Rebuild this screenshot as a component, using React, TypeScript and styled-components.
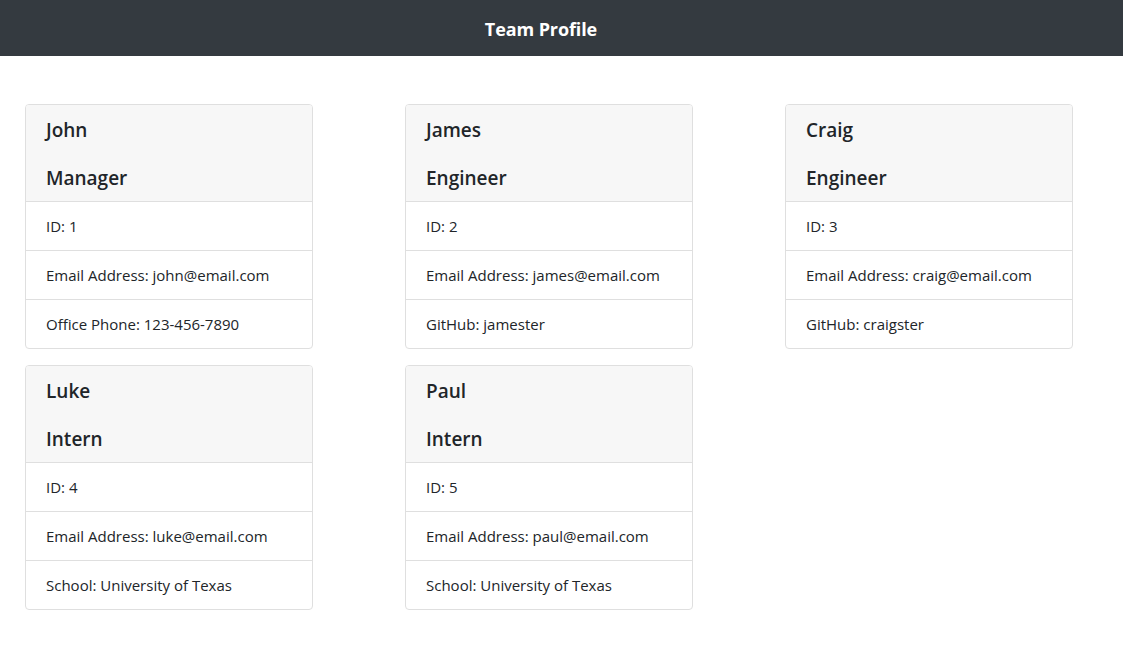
import React from "react";
import styled, { createGlobalStyle } from "styled-components";

const GlobalStyle = createGlobalStyle`
  * { box-sizing: border-box; }
  body {
    margin: 0;
    font-family: "Open Sans", "Noto Sans", sans-serif;
    font-size: 16px;
    line-height: 1.5;
    color: #212529;
    background: #fff;
  }
`;

const NavBar = styled.header`
  height: 56px;
  background: #343a40;
  display: flex;
  align-items: center;
  justify-content: center;
  padding-right: 41px;
  padding-top: 2px;
`;

const Title = styled.h1`
  margin: 0;
  color: #fff;
  font-size: 18px;
  font-weight: 700;
  line-height: 24px;
  letter-spacing: -0.1px;
`;

const Grid = styled.main`
  display: grid;
  grid-template-columns: repeat(3, 288px);
  column-gap: 92px;
  row-gap: 16px;
  padding: 48px 0 0 25px;
`;

const Card = styled.section`
  border: 1px solid #dfdfdf;
  border-radius: 4px;
  overflow: hidden;
  background: #fff;
`;

const CardHeader = styled.div`
  background: #f7f7f7;
  border-bottom: 1px solid #dfdfdf;
  padding: 13px 20px 11px;
  display: flex;
  flex-direction: column;
  gap: 24px;
`;

const HeaderLine = styled.h5`
  margin: 0;
  font-size: 19px;
  font-weight: 600;
  line-height: 24px;
`;

const List = styled.ul`
  list-style: none;
  margin: 0;
  padding: 0;
`;

const Item = styled.li`
  padding: 12px 20px;
  line-height: 24px;
  font-size: 15px;
  & + & { border-top: 1px solid #dfdfdf; }
`;

type Member = { name: string; role: string; id: number; email: string; extra: string };

const team: Member[] = [
  { name: "John", role: "Manager", id: 1, email: "john@email.com", extra: "Office Phone: 123-456-7890" },
  { name: "James", role: "Engineer", id: 2, email: "james@email.com", extra: "GitHub: jamester" },
  { name: "Craig", role: "Engineer", id: 3, email: "craig@email.com", extra: "GitHub: craigster" },
  { name: "Luke", role: "Intern", id: 4, email: "luke@email.com", extra: "School: University of Texas" },
  { name: "Paul", role: "Intern", id: 5, email: "paul@email.com", extra: "School: University of Texas" },
];

export default function App() {
  return (
    <>
      <GlobalStyle />
      <NavBar>
        <Title>Team Profile</Title>
      </NavBar>
      <Grid>
        {team.map((m) => (
          <Card key={m.id}>
            <CardHeader>
              <HeaderLine>{m.name}</HeaderLine>
              <HeaderLine>{m.role}</HeaderLine>
            </CardHeader>
            <List>
              <Item>ID: {m.id}</Item>
              <Item>Email Address: {m.email}</Item>
              <Item>{m.extra}</Item>
            </List>
          </Card>
        ))}
      </Grid>
    </>
  );
}
